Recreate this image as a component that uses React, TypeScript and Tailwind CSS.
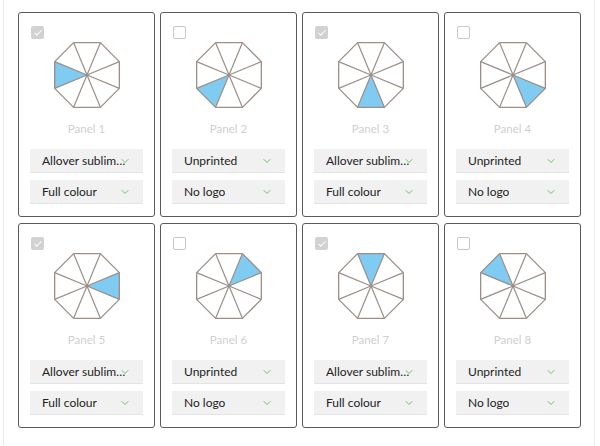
import React from 'react';
import { ChevronDown, Check } from 'lucide-react';

type Panel = {
  id: number;
  checked: boolean;
  print: string;
  logo: string;
};

const panels: Panel[] = [1, 2, 3, 4, 5, 6, 7, 8].map((n) => ({
  id: n,
  checked: n % 2 === 1,
  print: n % 2 === 1 ? 'Allover sublimation' : 'Unprinted',
  logo: n % 2 === 1 ? 'Full colour' : 'No logo',
}));

const R = 35;
const pt = (deg: number) => {
  const a = (deg * Math.PI) / 180;
  return [R * Math.cos(a), R * Math.sin(a)];
};
const verts = Array.from({ length: 8 }, (_, i) => pt(22.5 + 45 * i));

const Octagon: React.FC<{ panel: number }> = ({ panel }) => {
  const mid = 180 - 45 * (panel - 1);
  const a = pt(mid - 22.5);
  const b = pt(mid + 22.5);
  const outline = verts.map((v) => v.join(',')).join(' ');
  return (
    <svg width="74" height="74" viewBox="-37 -37 74 74">
      <polygon points={outline} fill="#fff" />
      <polygon points={`0,0 ${a.join(',')} ${b.join(',')}`} fill="#7fcbf1" />
      {verts.map((v, i) => (
        <line key={i} x1="0" y1="0" x2={v[0]} y2={v[1]} stroke="#9b8f88" strokeWidth="1.2" />
      ))}
      <polygon points={outline} fill="none" stroke="#9b8f88" strokeWidth="1.3" strokeLinejoin="round" />
    </svg>
  );
};

const Select: React.FC<{ value: string }> = ({ value }) => (
  <div className="relative h-6 bg-[#f1f1f1] border-b border-[#e4e4e4] flex items-center pl-3 pr-[14px]">
    <span className="block overflow-hidden whitespace-nowrap text-ellipsis text-[12px] text-[#222]">{value}</span>
    <ChevronDown size={12} strokeWidth={1.8} className="absolute z-10 right-[12px] top-[6px] text-[#5fbb5d]" />
  </div>
);

const Card: React.FC<{ p: Panel }> = ({ p }) => (
  <div className="relative h-[205px] rounded-[3px] border-[1.5px] border-[#5a5a5a] bg-white flex flex-col items-center pt-[25px] px-[11px]">
    {p.checked ? (
      <div className="absolute left-[12px] top-[13px] w-[13px] h-[13px] rounded-[2px] bg-[#d2d2d2] flex items-center justify-center">
        <Check size={10} strokeWidth={2.5} className="text-white" />
      </div>
    ) : (
      <div className="absolute left-[12px] top-[13px] w-[13px] h-[13px] rounded-[2px] border border-[#c8c8c8] bg-white" />
    )}
    <Octagon panel={p.id} />
    <div className="mt-[10px] text-[11.5px] leading-[14px] text-[#cfcfcf]">Panel {p.id}</div>
    <div className="mt-[13px] w-full flex flex-col gap-[7px]">
      <Select value={p.print} />
      <Select value={p.logo} />
    </div>
  </div>
);

export default function App() {
  return (
    <div className="w-[600px] h-[446px] bg-white" style={{ fontFamily: 'Lato, Roboto, "Liberation Sans", sans-serif' }}>
      <div className="ml-[3px] w-[592px] h-[446px] border-x border-[#ececec] pl-[14px] pt-[12px]">
        <div className="grid grid-cols-[repeat(4,137px)] gap-x-[5px] gap-y-[6px]">
          {panels.map((p) => (
            <Card key={p.id} p={p} />
          ))}
        </div>
      </div>
    </div>
  );
}
